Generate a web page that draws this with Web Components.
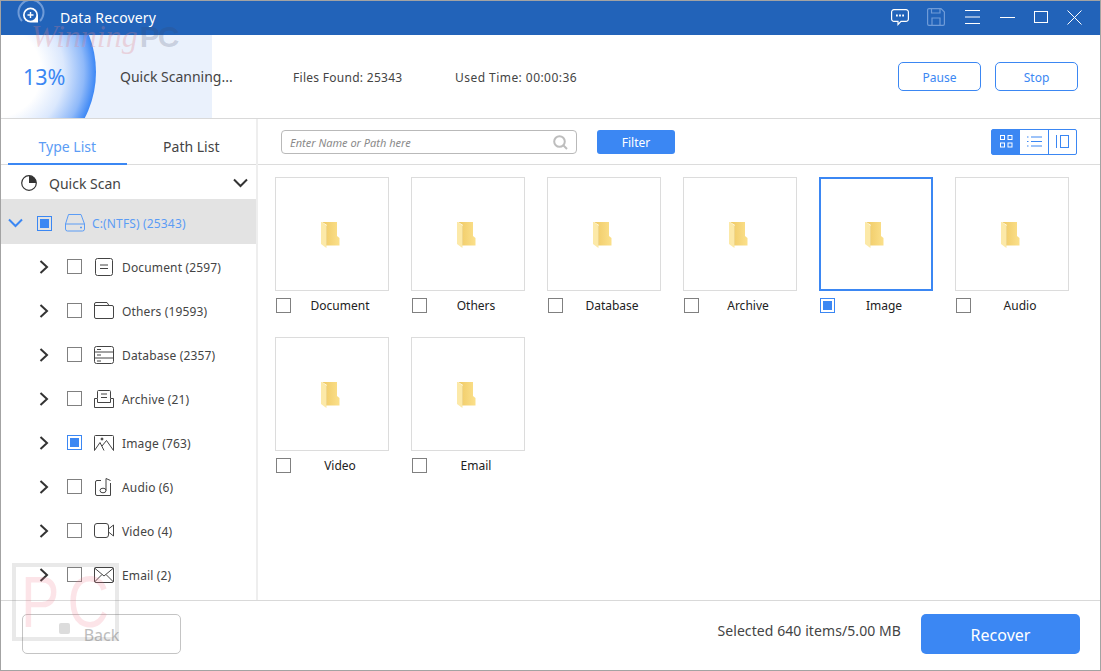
<!DOCTYPE html>
<html>
<head>
<meta charset="utf-8">
<title>Data Recovery</title>
<style>
html, body { margin: 0; padding: 0; background: #fff; }
body { font-family: "Noto Sans", "Open Sans", sans-serif; color: #444; overflow: hidden; }
</style>
</head>
<body>
<app-window>
  <title-bar></title-bar>
  <scan-header></scan-header>
  <div slot="side">
    <side-panel></side-panel>
  </div>
  <div slot="main">
    <main-toolbar></main-toolbar>
    <file-grid></file-grid>
  </div>
  <footer-bar></footer-bar>
</app-window>

<script>
const ICONS = {
    chevRight: '<svg width="12" height="16" viewBox="0 0 12 16"><path d="M2.5 2 L9 8 L2.5 14" fill="none" stroke="#333" stroke-width="2"/></svg>',
    chevDown: '<svg width="15" height="10" viewBox="0 0 15 10"><path d="M1 1.5 L7.5 8 L14 1.5" fill="none" stroke="currentColor" stroke-width="2"/></svg>',
    drive: '<svg width="20" height="18" viewBox="0 0 20 18" fill="none" stroke="#5b9cf5" stroke-width="1"><path d="M3.5 .5 H16 L19.5 10 V15 a2 2 0 0 1 -2 2 H2.500 a2 2 0 0 1 -2 -2 V10 Z"/><path d="M.5 10 H19.500"/><path d="M15 13.500 h2" stroke-width="1.500"/></svg>',
    document: '<svg width="18" height="18" viewBox="0 0 18 18" fill="none" stroke="#444"><rect x=".5" y=".5" width="17" height="17" rx="2"/><path d="M5 7 H13 M5 10.500 H13"/></svg>',
    others: '<svg width="20" height="17" viewBox="0 0 20 17" fill="none" stroke="#444"><path d="M.5 3 V15 a1.500 1.500 0 0 0 1.500 1.500 H18 a1.500 1.500 0 0 0 1.500 -1.500 V5 a1.500 1.500 0 0 0 -1.500 -1.500 H.5"/><path d="M.5 3 V2 a1.500 1.500 0 0 1 1.500 -1.500 H13 L15 3.500"/></svg>',
    database: '<svg width="20" height="18" viewBox="0 0 20 18" fill="none" stroke="#444"><rect x=".5" y=".5" width="19" height="17" rx="2"/><path d="M.5 6 H19.500 M.5 12 H19.500 M3 3.500 H7 M3 9 H7 M3 15 H7"/></svg>',
    archive: '<svg width="20" height="18" viewBox="0 0 20 18" fill="none" stroke="#444"><path d="M3.500 8 V1.500 a1 1 0 0 1 1 -1 H15.500 a1 1 0 0 1 1 1 V8"/><path d="M.5 17.500 V8.500 H3.500 V12.500 H16.500 V8.500 H19.500 V17.500 Z"/><path d="M7 4 H13 M7 7.500 H13"/></svg>',
    image: '<svg width="20" height="16" viewBox="0 0 20 16" fill="none" stroke="#444"><path d="M.5 15.500 V1.500 a1 1 0 0 1 1 -1 H18.500 a1 1 0 0 1 1 1 V15.500"/><path d="M.5 15.500 L6 7.500 L10 15.500 M8 11 L12.500 5.500 L19.500 15.500"/><circle cx="8" cy="4" r="1" fill="#444"/></svg>',
    audio: '<svg width="18" height="18" viewBox="0 0 18 18" fill="none" stroke="#444"><path d="M6 2.500 H2 a1.500 1.500 0 0 0 -1.500 1.500 V16 a1.500 1.500 0 0 0 1.500 1.500 H15.500 V5"/><path d="M11 12.500 V.5 L15.500 2.500"/><ellipse cx="8" cy="12.500" rx="3" ry="2.300"/></svg>',
    video: '<svg width="20" height="15" viewBox="0 0 20 15" fill="none" stroke="#444"><rect x=".5" y=".5" width="14" height="14" rx="2.500"/><path d="M14.500 6 L19.500 2 V13 L14.500 9"/></svg>',
    email: '<svg width="20" height="16" viewBox="0 0 20 16" fill="none" stroke="#444"><rect x=".5" y=".5" width="19" height="15" rx="1.500"/><path d="M.5 1 L10 9 L19.500 1 M.5 15 L8 7.500 M19.500 15 L12 7.500"/></svg>'
};

class AppWindow extends HTMLElement {
    constructor() {
        super();
        this.attachShadow({ mode: "open" });
        this.shadowRoot.innerHTML = `
<style>
:host { display: flex; flex-direction: column; position: relative; width: 1101px; height: 671px; box-sizing: border-box; border: 1px solid #a3a3a3; background: #fff; overflow: hidden; }
.body { flex: 1; display: flex; min-height: 0; }
.side { width: 255px; border-right: 2px solid #eeeeee; flex: none; }
.main { flex: 1; min-width: 0; }
.wm-top { position: absolute; left: 30px; top: 17px; font: italic 32px "Liberation Serif", serif; color: rgba(225, 130, 140, .28); pointer-events: none; white-space: nowrap; }
.wm-top b { font: bold 30px "Liberation Sans", sans-serif; color: rgba(60, 70, 100, .2); letter-spacing: -2px; margin-left: 2px; }
.wm-box { position: absolute; left: 11px; top: 562px; width: 107px; height: 78px; box-sizing: border-box; border: 4px solid rgba(120, 120, 120, .16); pointer-events: none; }
.wm-box span { display: block; font: 72px/70px "Liberation Sans", sans-serif; color: rgba(240, 120, 140, .2); letter-spacing: 10px; margin-left: 5px; transform: scaleX(.8); transform-origin: 0 0; white-space: nowrap; }
.wm-dot { position: absolute; left: 58px; top: 622px; width: 11px; height: 11px; border-radius: 2px; background: #dcdcdc; }
</style>
<slot></slot>
<div class="body">
  <div class="side"><slot name="side"></slot></div>
  <div class="main"><slot name="main"></slot></div>
</div>
<slot name="foot"></slot>
<div class="wm-top">Winning<b>PC</b></div>
<div class="wm-box"><span>PC</span></div>
<div class="wm-dot"></div>`;
    }
    connectedCallback() {
        const foot = this.querySelector("footer-bar");
        foot.setAttribute("slot", "foot");
    }
}

class TitleBar extends HTMLElement {
    constructor() {
        super();
        this.attachShadow({ mode: "open" });
        this.shadowRoot.innerHTML = `
<style>
:host { display: flex; align-items: center; height: 34px; background: #2263b9; color: #fff; flex: none; }
.logo { margin-left: 15px; width: 30px; height: 30px; margin-top: -8px; flex: none; }
.name { margin-left: 14px; font-size: 14px; letter-spacing: .15px; margin-top: -2px; }
.tools { margin-left: auto; display: flex; align-items: center; padding-bottom: 2px; }
.tools svg { display: block; flex: none; }
</style>
<svg class="logo" viewBox="0 0 30 30" fill="none">
  <path d="M6 22 A12.500 12.500 0 1 1 24 22" stroke="#6f9bd8" stroke-width="2"/>
  <path d="M22 23.500 H14.500 A7.500 7.500 0 1 1 22 16 Z" fill="#fff"/>
  <circle cx="14.500" cy="16" r="5.800" fill="#2263b9"/>
  <path d="M11.500 16 H17.500 M14.500 13 V19" stroke="#fff" stroke-width="1.400"/>
</svg>
<div class="name">Data Recovery</div>
<div class="tools">
  <svg width="18" height="17" viewBox="0 0 18 17" fill="none" stroke="#fff" stroke-width="1.200" style="margin-right:18px"><path d="M3 .6 H15 a2.400 2.400 0 0 1 2.400 2.400 V10 a2.400 2.400 0 0 1 -2.400 2.400 H10 L7 15.500 V12.400 H3 a2.400 2.400 0 0 1 -2.400 -2.400 V3 a2.400 2.400 0 0 1 2.400 -2.400 Z"/><path d="M5 6.500 h1.800 M8.100 6.500 h1.800 M11.200 6.500 h1.800" stroke-width="1.800"/></svg>
  <svg width="18" height="18" viewBox="0 0 18 18" fill="none" stroke="#6f9bd8" stroke-width="1.200" style="margin-right:20px"><path d="M2 .6 H14 L17.400 4 V16 a1.400 1.400 0 0 1 -1.400 1.400 H2 a1.400 1.400 0 0 1 -1.400 -1.400 V2 A1.400 1.400 0 0 1 2 .6 Z"/><path d="M4.500 .6 V5 H13 V.6 M5 17.400 V10 H13 V17.400"/></svg>
  <svg width="15" height="14" viewBox="0 0 15 14" fill="none" stroke="#fff" style="margin-right:20px"><path d="M0 .5 H15 M0 7 H15 M0 13.500 H15"/></svg>
  <svg width="15" height="3" viewBox="0 0 15 3" fill="none" stroke="#fff" style="margin-right:19px"><path d="M0 1.500 H15"/></svg>
  <svg width="14" height="12" viewBox="0 0 14 12" fill="none" stroke="#fff" style="margin-right:19px"><rect x=".5" y=".5" width="13" height="11"/></svg>
  <svg width="15" height="15" viewBox="0 0 15 15" fill="none" stroke="#fff" style="margin-right:18px"><path d="M.5 .5 L14.500 14.500 M14.500 .5 L.5 14.500"/></svg>
</div>`;
    }
}

class ScanHeader extends HTMLElement {
    constructor() {
        super();
        this.attachShadow({ mode: "open" });
        this.shadowRoot.innerHTML = `
<style>
:host { display: flex; position: relative; align-items: center; height: 83px; border-bottom: 1px solid #d9d9d9; flex: none; overflow: hidden; font-size: 12px; }
.fill { position: absolute; left: 0; top: 0; bottom: 0; width: 211px; background: #eaf1fc; overflow: hidden; }
.disc { position: absolute; left: -105px; top: -63px; width: 200px; height: 200px; border-radius: 50%; background: radial-gradient(circle closest-side, #fff 0, #fff 45%, #dbe8fd 68%, #8fb9f9 88%, #3c87f5 100%); }
.pct { position: relative; width: 119px; padding-left: 22px; box-sizing: border-box; font-size: 21.500px; color: #3b87f3; flex: none; }
.state { position: relative; width: 173px; font-size: 14px; color: #444; flex: none; }
.found { width: 162px; flex: none; letter-spacing: .28px; padding-top: 1px; }
.time { flex: 1; letter-spacing: .45px; padding-top: 1px; }
.btn { width: 83px; height: 29px; box-sizing: border-box; border: 1px solid #3b87f3; border-radius: 5px; padding-top: 1px; color: #3b87f3; display: flex; align-items: center; justify-content: center; flex: none; }
.btn + .btn { margin: 0 22px 0 14px; }
</style>
<div class="fill"><div class="disc"></div></div>
<div class="pct">13%</div>
<div class="state">Quick Scanning...</div>
<div class="found">Files Found: 25343</div>
<div class="time">Used Time: 00:00:36</div>
<div class="btn">Pause</div>
<div class="btn">Stop</div>`;
    }
}

class CheckBox extends HTMLElement {
    constructor() {
        super();
        this.attachShadow({ mode: "open" });
        this.shadowRoot.innerHTML = `
<style>
:host { display: block; width: 15px; height: 15px; box-sizing: border-box; border: 1px solid #808080; flex: none; }
:host([checked]) { border-color: #3b87f3; padding: 2px; }
i { display: none; width: 9px; height: 9px; background: #3b87f3; }
:host([checked]) i { display: block; }
</style>
<i></i>`;
    }
}

class TreeRow extends HTMLElement {
    constructor() {
        super();
        this.attachShadow({ mode: "open" });
    }
    connectedCallback() {
        const root = this.hasAttribute("root");
        const chev = root ? ICONS.chevDown : ICONS.chevRight;
        const icon = ICONS[this.getAttribute("icon")];
        const checked = this.hasAttribute("checked") ? "checked" : "";
        this.shadowRoot.innerHTML = `
<style>
:host { display: grid; align-items: center; height: 44px; box-sizing: border-box; padding-top: 1px; font-size: 12px; letter-spacing: .15px; color: #444; grid-template-columns: 37px 29px 27px 28px 1fr; }
:host([root]) { grid-template-columns: 7px 29px 28px 27px 1fr; height: 45px; padding-top: 3px; background: #e3e3e3; color: #5b9cf5; }
.chev { grid-column: 2; display: flex; color: #3b87f3; }
check-box { grid-column: 3; }
.icon { grid-column: 4; display: flex; justify-content: center; width: 20px; }
.text { grid-column: 5; white-space: nowrap; padding-top: 1px; }
</style>
<div class="chev">${chev}</div>
<check-box ${checked}></check-box>
<div class="icon">${icon}</div>
<div class="text"><slot></slot></div>`;
    }
}

class SidePanel extends HTMLElement {
    constructor() {
        super();
        this.attachShadow({ mode: "open" });
        this.shadowRoot.innerHTML = `
<style>
:host { display: block; }
.tabs { display: flex; height: 46px; padding-left: 7px; border-bottom: 1px solid #dcdcdc; font-size: 14px; box-sizing: border-box; }
.tab { width: 119px; display: flex; align-items: center; justify-content: center; color: #5b9cf5; padding-top: 10px; box-sizing: border-box; border-bottom: 2px solid #3b87f3; height: 46px; }
.tab + .tab { color: #444; border-bottom: 0; width: 130px; padding-bottom: 2px; }
.scan { display: flex; align-items: center; height: 34px; box-sizing: border-box; padding-top: 2px; font-size: 14px; color: #444; padding-left: 20px; }
.scan span { margin-left: 12px; flex: 1; }
.scan .down { display: flex; margin-right: 8px; color: #333; }
</style>
<div class="tabs"><div class="tab">Type List</div><div class="tab">Path List</div></div>
<div class="scan">
  <svg width="16" height="16" viewBox="0 0 16 16"><circle cx="8" cy="8" r="7.300" fill="none" stroke="#333" stroke-width="1.200"/><path d="M8 8 V.7 A7.300 7.300 0 0 1 15.300 8 Z" fill="#333"/></svg>
  <span>Quick Scan</span>
  <div class="down">${ICONS.chevDown}</div>
</div>
<tree-row root icon="drive" checked>C:(NTFS) (25343)</tree-row>
<tree-row icon="document">Document (2597)</tree-row>
<tree-row icon="others">Others (19593)</tree-row>
<tree-row icon="database">Database (2357)</tree-row>
<tree-row icon="archive">Archive (21)</tree-row>
<tree-row icon="image" checked>Image (763)</tree-row>
<tree-row icon="audio">Audio (6)</tree-row>
<tree-row icon="video">Video (4)</tree-row>
<tree-row icon="email">Email (2)</tree-row>`;
    }
}

class MainToolbar extends HTMLElement {
    constructor() {
        super();
        this.attachShadow({ mode: "open" });
        this.shadowRoot.innerHTML = `
<style>
:host { display: flex; align-items: center; height: 46px; box-sizing: border-box; border-bottom: 1px solid #dcdcdc; padding: 1px 23px 0 23px; font-size: 12px; }
.search { width: 296px; height: 24px; box-sizing: border-box; border: 1px solid #b9b9b9; border-radius: 4px; display: flex; align-items: center; padding: 0 8px; font-style: italic; font-size: 11px; color: #8a8a8a; justify-content: space-between; }
.filter { margin-left: 20px; width: 78px; height: 24px; border-radius: 3px; background: #3b87f3; color: #fff; display: flex; align-items: center; justify-content: center; }
.views { margin-left: auto; display: flex; width: 86px; height: 26px; box-sizing: border-box; border: 1px solid #3b87f3; border-radius: 2px; margin-top: -1px; }
.views div { display: flex; align-items: center; justify-content: center; width: 28px; flex: none; }
.views div + div { border-right: 1px solid #3b87f3; }
.views div:last-child { border: 0; flex: 1; }
.views .on { background: #3b87f3; }
</style>
<div class="search">Enter Name or Path here
  <svg width="15" height="15" viewBox="0 0 15 15" fill="none" stroke="#bdbdbd" stroke-width="2"><circle cx="6.500" cy="6.500" r="5.300"/><path d="M10.500 10.500 L14 14"/></svg>
</div>
<div class="filter">Filter</div>
<div class="views">
  <div class="on"><svg width="13" height="13" viewBox="0 0 13 13" fill="none" stroke="#fff"><rect x=".5" y=".5" width="4" height="4"/><rect x="8" y=".5" width="4" height="4"/><rect x=".5" y="8" width="4" height="4"/><rect x="8" y="8" width="4" height="4"/></svg></div>
  <div><svg width="15" height="11" viewBox="0 0 15 11" fill="none" stroke="#3b87f3"><path d="M0 1 H1.500 M4 1 H15 M0 5.500 H1.500 M4 5.500 H15 M0 10 H1.500 M4 10 H15"/></svg></div>
  <div><svg width="13" height="13" viewBox="0 0 13 13" fill="none" stroke="#3b87f3"><path d="M.5 0 V13"/><rect x="4.500" y=".5" width="8" height="12"/></svg></div>
</div>`;
    }
}

class FileCard extends HTMLElement {
    constructor() {
        super();
        this.attachShadow({ mode: "open" });
    }
    connectedCallback() {
        const checked = this.hasAttribute("checked") ? "checked" : "";
        this.shadowRoot.innerHTML = `
<style>
:host { display: block; width: 114px; height: 148px; font-size: 12px; color: #222; }
.thumb { height: 114px; box-sizing: border-box; border: 1px solid #dcdcdc; display: flex; align-items: center; justify-content: center; }
:host([checked]) .thumb { border: 2px solid #3b87f3; }
.row { display: flex; align-items: center; margin-top: 7px; padding-left: 1px; height: 15px; }
.row span { flex: 1; text-align: center; }
svg { display: block; margin: 2px 0 0 -4px; }
</style>
<div class="thumb">
  <svg width="19" height="26" viewBox="0 0 19 26">
    <defs><linearGradient id="g" x1="0" x2="1"><stop offset="0" stop-color="#efc964"/><stop offset="1" stop-color="#fbe08b"/></linearGradient></defs>
    <path d="M1 0 H16 V14 L18.500 16 V23.500 H6 V3 Z" fill="url(#g)"/>
    <path d="M0 0 H1 L5.500 3.500 V26 L4 25 L0 22 Z" fill="#fce9a8"/>
    <path d="M5.500 3.500 V23.500" stroke="#e8c25e" stroke-width=".6"/>
  </svg>
</div>
<div class="row"><check-box ${checked}></check-box><span><slot></slot></span></div>`;
    }
}

class FileGrid extends HTMLElement {
    constructor() {
        super();
        this.attachShadow({ mode: "open" });
        this.shadowRoot.innerHTML = `
<style>
:host { display: grid; grid-template-columns: repeat(6, 114px); column-gap: 22px; row-gap: 12px; padding: 12px 0 0 17px; }
</style>
<file-card>Document</file-card>
<file-card>Others</file-card>
<file-card>Database</file-card>
<file-card>Archive</file-card>
<file-card checked>Image</file-card>
<file-card>Audio</file-card>
<file-card>Video</file-card>
<file-card>Email</file-card>`;
    }
}

class FooterBar extends HTMLElement {
    constructor() {
        super();
        this.attachShadow({ mode: "open" });
        this.shadowRoot.innerHTML = `
<style>
:host { display: flex; align-items: center; height: 70px; box-sizing: border-box; border-top: 1px solid #d9d9d9; padding: 0 20px 3px 21px; flex: none; position: relative; }
.back { width: 159px; height: 40px; box-sizing: border-box; border: 1px solid #c4c4c4; border-radius: 5px; padding-top: 2px; color: #bdbdbd; font-size: 16px; display: flex; align-items: center; justify-content: center; }
.sel { margin-left: auto; font-size: 14px; letter-spacing: .08px; color: #444; margin-right: 20px; margin-top: -8px; }
.rec { width: 159px; height: 40px; box-sizing: border-box; padding-top: 2px; border-radius: 5px; background: #3b87f3; color: #fff; font-size: 16px; display: flex; align-items: center; justify-content: center; }
</style>
<div class="back">Back</div>
<div class="sel">Selected 640 items/5.00 MB</div>
<div class="rec">Recover</div>`;
    }
}

customElements.define("check-box", CheckBox);
customElements.define("tree-row", TreeRow);
customElements.define("file-card", FileCard);
customElements.define("title-bar", TitleBar);
customElements.define("scan-header", ScanHeader);
customElements.define("side-panel", SidePanel);
customElements.define("main-toolbar", MainToolbar);
customElements.define("file-grid", FileGrid);
customElements.define("footer-bar", FooterBar);
customElements.define("app-window", AppWindow);
</script>
</body>
</html>
